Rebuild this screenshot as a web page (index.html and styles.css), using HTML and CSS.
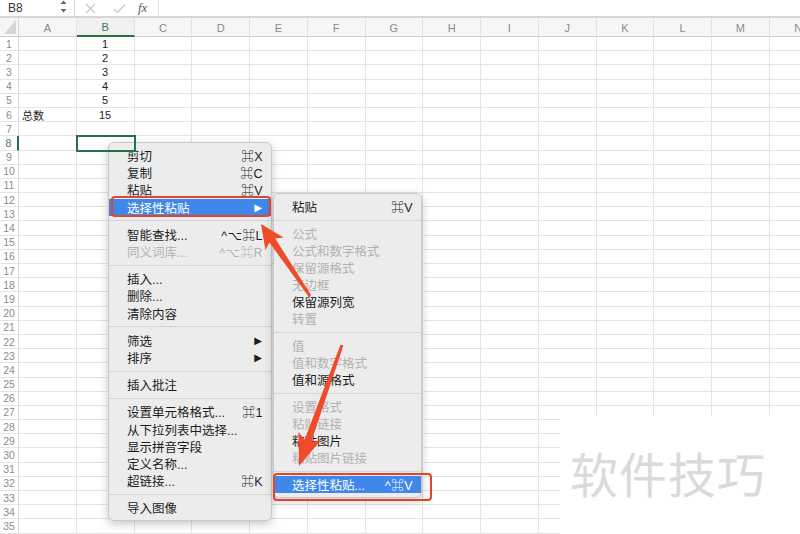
FILE: index.html
```html
<!DOCTYPE html>
<html lang="zh-CN">
<head>
    <meta charset="UTF-8">
    <title>选择性粘贴</title>
    <link rel="stylesheet" href="styles.css">
</head>
<body>
    <div id="app">
        <div class="formula-bar">
            <div class="name-box">
                <span>B8</span>
                <svg class="name-arrows" width="7" height="14" viewBox="0 0 7 14">
                    <path d="M0.5 4 L3.5 0.5 L6.5 4 Z" fill="#666"/>
                    <path d="M0.5 9 L3.5 12.5 L6.5 9 Z" fill="#666"/>
                </svg>
            </div>
            <div class="fx-buttons">
                <svg class="fx-cancel" width="11" height="11" viewBox="0 0 11 11">
                    <path d="M1 1 L10 10 M10 1 L1 10" stroke="#c6c6c6" stroke-width="1.2" fill="none"/>
                </svg>
                <svg class="fx-ok" width="13" height="11" viewBox="0 0 13 11">
                    <path d="M1 6 L4.5 9.5 L12 1.5" stroke="#c6c6c6" stroke-width="1.2" fill="none"/>
                </svg>
                <span class="fx-label">fx</span>
            </div>
            <div class="formula-input"></div>
        </div>

        <div class="sheet" id="sheet"></div>

        <div class="watermark">软件技巧</div>

        <div class="menu context-menu">
            <div class="menu-item"><span>剪切</span><span class="key">⌘X</span></div>
            <div class="menu-item"><span>复制</span><span class="key">⌘C</span></div>
            <div class="menu-item"><span>粘贴</span><span class="key">⌘V</span></div>
            <div class="menu-item active"><span>选择性粘贴</span><span class="sub-arrow">▶</span></div>
            <div class="separator"></div>
            <div class="menu-item"><span>智能查找...</span><span class="key">^⌥⌘L</span></div>
            <div class="menu-item disabled"><span>同义词库...</span><span class="key">^⌥⌘R</span></div>
            <div class="separator"></div>
            <div class="menu-item"><span>插入...</span></div>
            <div class="menu-item"><span>删除...</span></div>
            <div class="menu-item"><span>清除内容</span></div>
            <div class="separator"></div>
            <div class="menu-item"><span>筛选</span><span class="sub-arrow">▶</span></div>
            <div class="menu-item"><span>排序</span><span class="sub-arrow">▶</span></div>
            <div class="separator"></div>
            <div class="menu-item"><span>插入批注</span></div>
            <div class="separator"></div>
            <div class="menu-item"><span>设置单元格格式...</span><span class="key">⌘1</span></div>
            <div class="menu-item"><span>从下拉列表中选择...</span></div>
            <div class="menu-item"><span>显示拼音字段</span></div>
            <div class="menu-item"><span>定义名称...</span></div>
            <div class="menu-item"><span>超链接...</span><span class="key">⌘K</span></div>
            <div class="separator"></div>
            <div class="menu-item"><span>导入图像</span></div>
        </div>

        <div class="menu sub-menu">
            <div class="menu-item"><span>粘贴</span><span class="key">⌘V</span></div>
            <div class="separator"></div>
            <div class="menu-item disabled"><span>公式</span></div>
            <div class="menu-item disabled"><span>公式和数字格式</span></div>
            <div class="menu-item disabled"><span>保留源格式</span></div>
            <div class="menu-item disabled"><span>无边框</span></div>
            <div class="menu-item"><span>保留源列宽</span></div>
            <div class="menu-item disabled"><span>转置</span></div>
            <div class="separator"></div>
            <div class="menu-item disabled"><span>值</span></div>
            <div class="menu-item disabled"><span>值和数字格式</span></div>
            <div class="menu-item"><span>值和源格式</span></div>
            <div class="separator"></div>
            <div class="menu-item disabled"><span>设置格式</span></div>
            <div class="menu-item disabled"><span>粘贴链接</span></div>
            <div class="menu-item"><span>粘贴图片</span></div>
            <div class="menu-item disabled"><span>粘贴图片链接</span></div>
            <div class="separator"></div>
            <div class="menu-item active"><span>选择性粘贴...</span><span class="key">^⌘V</span></div>
        </div>

        <div class="callout callout-main"></div>
        <div class="callout callout-sub"></div>

        <!-- annotation arrows -->
        <svg class="annotations" width="800" height="534" viewBox="0 0 800 534">
            <polygon points="261,224 283.6,237.6 275.2,238.5 311.2,295.2 308.8,296.8 269.4,242.5 265.4,250" fill="#ef4b2a"/>
            <polygon points="299,466 321,439.9 311.3,441.8 343.4,345.5 340.6,344.5 304.7,439.4 298.4,431.9" fill="#ef4b2a"/>
        </svg>
    </div>

    <script>
        const sheet = document.getElementById('sheet');
        const cols = ['A', 'B', 'C', 'D', 'E', 'F', 'G', 'H', 'I', 'J', 'K', 'L', 'M', 'N'];
        const data = {
            B1: '1', B2: '2', B3: '3', B4: '4', B5: '5',
            A6: '总数', B6: '15'
        };
        const activeCol = 'B';
        const activeRow = 8;

        function addCell(cls, text) {
            const el = document.createElement('div');
            el.className = cls;
            if (text !== undefined) el.textContent = text;
            sheet.appendChild(el);
        }

        addCell('corner');
        cols.forEach(c => addCell('col-head' + (c === activeCol ? ' selected' : ''), c));

        for (let r = 1; r <= 35; r++) {
            addCell('row-head' + (r === activeRow ? ' selected' : ''), r);
            cols.forEach(c => {
                let cls = 'cell';
                if (c === 'B') cls += ' center';
                if (c === activeCol && r === activeRow) cls += ' active';
                addCell(cls, data[c + r]);
            });
        }
    </script>
</body>
</html>
```

FILE: styles.css
```css
body {
    margin: 0;
    padding: 0;
    background: #fff;
    font-family: "Liberation Sans", "Noto Sans CJK SC", "DejaVu Sans", sans-serif;
    color: #222;
}
#app {
    position: relative;
    width: 800px;
    height: 534px;
    overflow: hidden;
}

/* formula bar */
.formula-bar {
    display: flex;
    height: 16px;
    border-bottom: 2px solid #d6d6d6;
    background: #fff;
}
.name-box {
    display: flex;
    align-items: center;
    justify-content: space-between;
    width: 75px;
    padding: 0 7px 0 8px;
    box-sizing: border-box;
    border-right: 1px solid #d9d9d9;
    font-size: 12px;
    color: #333;
}
.name-arrows {
    margin-top: -2px;
}
.fx-buttons {
    display: flex;
    align-items: center;
    width: 84px;
    padding-left: 10px;
    box-sizing: border-box;
    border-right: 1px solid #e0e0e0;
}
.fx-ok {
    margin-left: 17px;
}
.fx-label {
    margin-left: 12px;
    font-family: "Liberation Serif", serif;
    font-style: italic;
    font-size: 13px;
    color: #555;
}
.formula-input {
    flex: 1;
}

/* grid */
.sheet {
    display: grid;
    grid-template-columns: 19px repeat(14, 57.75px);
    grid-template-rows: 19px repeat(35, 14.2px);
}
.corner {
    position: relative;
    background: #f6f6f6;
    border-right: 1px solid #d9d9d9;
    border-bottom: 1px solid #cfcfcf;
    box-sizing: border-box;
}
.corner::after {
    content: '';
    position: absolute;
    right: 2px;
    bottom: 2px;
    width: 12px;
    height: 14px;
    background: #d6d6d6;
    clip-path: polygon(100% 0, 100% 100%, 0 100%);
}
.col-head {
    display: flex;
    align-items: center;
    justify-content: center;
    background: #f6f6f6;
    border-right: 1px solid #e2e2e2;
    border-bottom: 1px solid #cfcfcf;
    box-sizing: border-box;
    font-size: 11px;
    color: #8a8a8a;
    padding-top: 1px;
}
.col-head.selected {
    color: #3d7a55;
    border-bottom: 2px solid #217346;
    background: #f0f0f0;
}
.row-head {
    display: flex;
    align-items: center;
    justify-content: center;
    border-right: 1px solid #d9d9d9;
    border-bottom: 1px solid #e4e4e4;
    box-sizing: border-box;
    font-size: 10.5px;
    color: #8c8c8c;
}
.row-head.selected {
    color: #3d7a55;
    border-right: 2px solid #217346;
}
.cell {
    display: flex;
    align-items: center;
    padding-left: 3px;
    border-right: 1px solid #e4e4e4;
    border-bottom: 1px solid #e4e4e4;
    box-sizing: border-box;
    font-size: 11px;
    white-space: nowrap;
}
.cell.center {
    justify-content: center;
    padding-left: 0;
}
.cell.active {
    position: relative;
    z-index: 1;
    outline: 2px solid #2a6f47;
    outline-offset: -1px;
}

/* watermark */
.watermark {
    position: absolute;
    left: 560px;
    top: 416px;
    right: 0;
    bottom: 0;
    padding: 30px 0 0 10px;
    background: #fff;
    font-family: "Noto Sans CJK SC", sans-serif;
    font-size: 48px;
    line-height: 52px;
    letter-spacing: 1px;
    color: #dadada;
}

/* context menus */
.menu {
    position: absolute;
    padding: 4px 0;
    box-sizing: border-box;
    background: #ececec;
    border: 1px solid #c9c9c9;
    border-radius: 6px;
    box-shadow: 0 3px 10px rgba(0,0,0,0.22);
    font-size: 12.5px;
    color: #1d1d1d;
}
.context-menu {
    left: 108px;
    top: 142px;
    width: 164px;
}
.sub-menu {
    left: 273px;
    top: 193px;
    width: 149px;
}
.menu-item {
    display: flex;
    align-items: center;
    justify-content: space-between;
    height: 17.2px;
    padding: 0 8px 0 18px;
    white-space: nowrap;
}
.sub-menu .menu-item {
    height: 17px;
}
.menu-item.disabled {
    color: #b2b2b2;
}
.menu-item.active {
    background: #3f88ea;
    color: #fff;
}
.key {
    letter-spacing: 0.5px;
}
.sub-arrow {
    font-family: "DejaVu Sans", sans-serif;
    font-size: 10px;
    padding-right: 1px;
}
.separator {
    margin: 4.5px 0;
    border-top: 1px solid #d4d4d4;
}

/* annotations */
.callout {
    position: absolute;
    border: 2px solid #e2442c;
    border-radius: 4px;
    box-sizing: border-box;
}
.callout-main {
    left: 111px;
    top: 196px;
    width: 160px;
    height: 21px;
}
.callout-sub {
    left: 273px;
    top: 473px;
    width: 159px;
    height: 28px;
}
.annotations {
    position: absolute;
    left: 0;
    top: 0;
    pointer-events: none;
}
```
